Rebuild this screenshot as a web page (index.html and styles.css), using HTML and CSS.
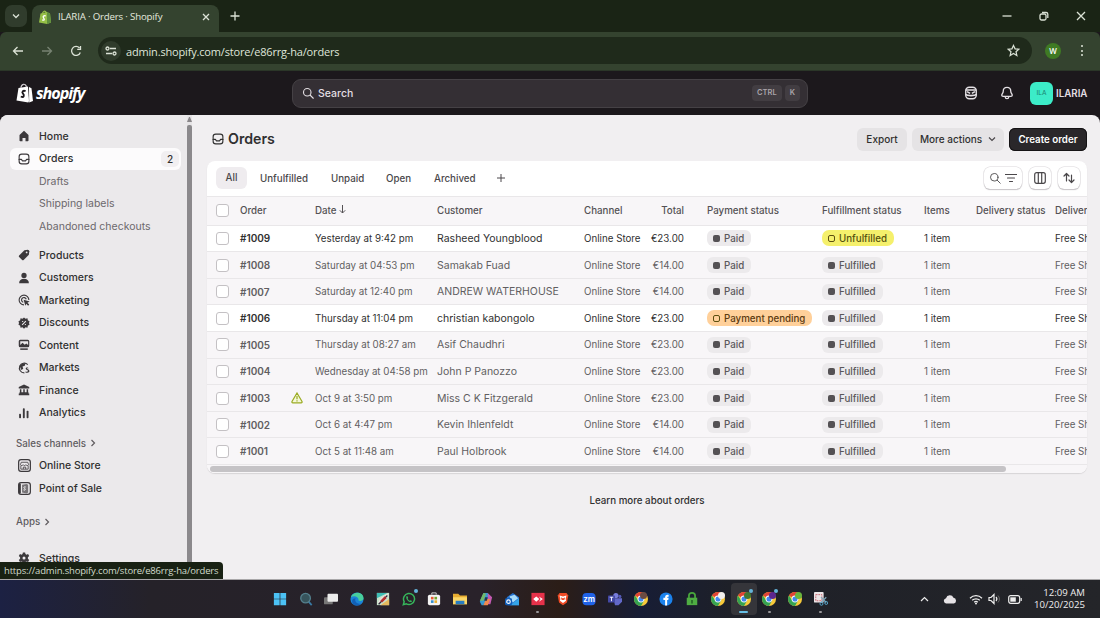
FILE: index.html
```
<!DOCTYPE html>
<html lang="en">
<head>
    <meta charset="utf-8">
    <title>ILARIA · Orders · Shopify</title>
    <link rel="stylesheet" href="styles.css">
</head>
<body>
    <svg class="defs" width="0" height="0">
        <symbol id="inbox" viewBox="0 0 16 16"><rect x="1.5" y="1.5" width="13" height="13" rx="3.5"/><path d="M1.5 8.5h3l1.5 2h4l1.5-2h3"/></symbol>
        <symbol id="search" viewBox="0 0 16 16"><circle cx="7" cy="7" r="5"/><path d="M11 11l4 4"/></symbol>
        <symbol id="chrome" viewBox="0 0 16 16">
            <circle cx="8" cy="8" r="8" fill="#f7c93a"/>
            <path d="M8 8 1.1 4A8 8 0 0 1 14.9 4L15 5H8z" fill="#e04436"/>
            <path d="M1.1 4A8 8 0 0 0 8 16l3.6-6.4L5 10z" fill="#35a352"/>
            <circle cx="8" cy="8" r="3.9" fill="#fff"/><circle cx="8" cy="8" r="2.9" fill="#4286f0"/>
        </symbol>
    </svg>

    <!-- browser -->
    <div class="tabstrip">
        <div class="tab-search"><svg width="8" height="8" viewBox="0 0 8 8"><path d="M1 2.5l3 3 3-3"/></svg></div>
        <div class="tab">
            <svg class="favicon" width="12" height="14" viewBox="0 0 12 14"><path d="M1.5 3.5 8 2l3 1.5 1 9-4 1.5L0 12.5z" fill="#95bf47"/><path d="M8 2l3 1.5 1 9L8 14z" fill="#5e8e3e"/><path d="M3.5 4c0-3 3-4 3.8-1" fill="none" stroke="#95bf47"/><path d="M6.8 6C5 5.200 3.500 6.500 4.500 7.800S6 10.800 3.200 9.800" fill="none" stroke="#fff" stroke-width="1.3"/></svg>
            <span class="tab-title">ILARIA · Orders · Shopify</span>
            <svg class="tab-close" width="8" height="8" viewBox="0 0 8 8"><path d="M1 1l6 6M7 1L1 7"/></svg>
        </div>
        <svg class="new-tab" width="10" height="10" viewBox="0 0 10 10"><path d="M5 .5v9M.5 5h9"/></svg>
        <div class="window-buttons">
            <svg width="10" height="10" viewBox="0 0 10 10"><path d="M.5 5h9"/></svg>
            <svg width="10" height="10" viewBox="0 0 10 10"><rect x="1" y="3" width="6" height="6" rx="1.500"/><path d="M3 1.500h4A1.700 1.700 0 0 1 8.800 3v4"/></svg>
            <svg width="10" height="10" viewBox="0 0 10 10"><path d="M1 1l8 8M9 1L1 9"/></svg>
        </div>
    </div>
    <div class="toolbar">
        <svg class="nav-icon" width="12" height="12" viewBox="0 0 12 12"><path d="M11 6H1.500M5.500 2l-4 4 4 4"/></svg>
        <svg class="nav-icon dim" width="12" height="12" viewBox="0 0 12 12"><path d="M1 6h9.500M6.500 2l4 4-4 4"/></svg>
        <svg class="nav-icon" width="12" height="12" viewBox="0 0 12 12"><path d="M10.300 7.500A4.500 4.500 0 1 1 9.500 3M10.500 1v3.300H7.200"/></svg>
        <div class="omnibox">
            <span class="site-info"><svg width="12" height="10" viewBox="0 0 12 10"><path d="M5 2.500h6M1 7.500h6"/><circle cx="2.500" cy="2.500" r="1.500"/><circle cx="9.500" cy="7.500" r="1.500"/></svg></span>
            <span class="url">admin.shopify.com/store/e86rrg-ha/orders</span>
            <svg class="star" width="13" height="13" viewBox="0 0 14 14"><path d="M7 1.500l1.700 3.700 4 .4-3 2.700.9 4L7 10.200l-3.600 2.100.9-4-3-2.700 4-.4z"/></svg>
        </div>
        <span class="profile">W</span>
        <span class="kebab"><i></i><i></i><i></i></span>
    </div>

    <!-- admin top bar -->
    <div class="topbar">
        <div class="logo">
            <svg width="18" height="20" viewBox="0 0 18 20"><path d="M2.500 5 12 3.500l1 14.500-.6 1.500L.5 17.500z" fill="#fff"/><path d="M13 4l2.500 1.300L17 18l-3.800 1.500z" fill="#fff"/><path d="M5 5c0-4 4.500-5.500 5.500-1" fill="none" stroke="#cfcacf" stroke-width="1.200"/><path d="M9.600 8.200C7 7 5.500 9 7 10.700s1 4.300-2.200 2.800" fill="none" stroke="#1c181c" stroke-width="1.900"/></svg>
            <span>shopify</span>
        </div>
        <div class="search">
            <svg class="line" width="12" height="12"><use href="#search"/></svg>
            <span class="search-text">Search</span>
            <kbd>CTRL</kbd><kbd>K</kbd>
        </div>
        <div class="account">
            <svg width="14" height="14" viewBox="0 0 16 16"><rect x="2" y="1.500" width="12" height="13" rx="4" fill="none" stroke="#e3dfe3" stroke-width="1.600"/><path d="M2 4.500h12M1.500 9.500c2.500 2 10.500 2 13 0M3.500 6.500l3.500 2M12.500 6.500l-3.500 2" fill="none" stroke="#e3dfe3" stroke-width="1.800"/></svg>
            <svg class="line" width="14" height="14" viewBox="0 0 16 16"><path d="M8 1.500c-3 0-4.300 2-4.300 4.500 0 2.500-1.700 3-1.700 4.600 0 .9.700 1.200 1.500 1.200h9c.8 0 1.500-.3 1.500-1.200 0-1.600-1.700-2.100-1.700-4.600 0-2.500-1.300-4.500-4.300-4.500zM6 12.500c0 2.700 4 2.700 4 0"/></svg>
            <span class="avatar">ILA</span>
            <span class="store-name">ILARIA</span>
        </div>
    </div>

    <div class="app">
        <div class="sidebar">
            <div class="nav-item"><svg viewBox="0 0 16 16"><path d="M8 1 14 6.500V14a1 1 0 0 1-1 1h-3v-4.500H6V15H3a1 1 0 0 1-1-1V6.500z"/></svg>Home</div>
            <div class="nav-item active"><svg class="line"><use href="#inbox"/></svg>Orders<span class="count">2</span></div>
            <div class="nav-item sub">Drafts</div>
            <div class="nav-item sub">Shipping labels</div>
            <div class="nav-item sub">Abandoned checkouts</div>
            <div class="nav-group">
                <div class="nav-item"><svg viewBox="0 0 16 16"><path d="M8.500 1.500 13 1a2 2 0 0 1 2 2l-.5 4.500-7 7a1.500 1.500 0 0 1-2 0l-4-4a1.500 1.500 0 0 1 0-2z"/><circle cx="11.500" cy="4.500" r="1.200" fill="#ebe9eb"/></svg>Products</div>
                <div class="nav-item"><svg viewBox="0 0 16 16"><circle cx="8" cy="4.500" r="3.500"/><path d="M1.500 15c0-4 2.500-6 6.500-6s6.500 2 6.500 6z"/></svg>Customers</div>
                <div class="nav-item"><svg viewBox="0 0 16 16"><path class="stroke" d="M14.500 8A6.500 6.500 0 1 0 8 14.500M11 7a3.200 3.200 0 1 0-4 4"/><path d="M7.500 7.500 15.500 10l-3 1.500 2.500 2.500-1.500 1.500-2.500-2.500-1.200 2.500z"/></svg>Marketing</div>
                <div class="nav-item"><svg viewBox="0 0 16 16"><path d="M8 .5l2 1.700 2.600-.4.5 2.600L15.500 6 14.600 8l.9 2-2.400 1.600-.5 2.600-2.600-.4-2 1.700-2-1.700-2.600.4-.5-2.600L.5 10l.9-2-.9-2 2.400-1.600.5-2.600 2.600.4z"/><path d="M5.500 10.500l5-5M5.500 6h1.400M9.100 10h1.400" stroke="#ebe9eb" stroke-width="1.400"/></svg>Discounts</div>
                <div class="nav-item"><svg viewBox="0 0 16 16"><path fill-rule="evenodd" d="M3 1h10a2 2 0 0 1 2 2v6a2 2 0 0 1-2 2H3a2 2 0 0 1-2-2V3a2 2 0 0 1 2-2zM3 8l3-3 3 2.500L11 6l2.500 2V3H3z"/><path d="M3 12.500h10v2H3z"/></svg>Content</div>
                <div class="nav-item"><svg viewBox="0 0 16 16"><path class="stroke" d="M8.500 14.500A6.500 6.500 0 1 1 13 3.500"/><path d="M2 5l4-3.500 4 .5-1 3-3 1 1 3-2.500 1.500zM13 7v-1M13.500 7.500c-4-1-4 2.500-1.500 3s1.800 3.500-2 2v1.500c6 2 6.500-3.500 3-4.500-2-.6-1-1.500 1-.7z"/></svg>Markets</div>
                <div class="nav-item"><svg viewBox="0 0 16 16"><path d="M8 .5 15 4v2H1V4zM2.500 7h2v4h-2zM7 7h2v4H7zM11.500 7h2v4h-2zM2 11h12v1.500h1V15H1v-2.500h1z"/></svg>Finance</div>
                <div class="nav-item"><svg viewBox="0 0 16 16"><rect x="1.500" y="9" width="2.500" height="6" rx="1"/><rect x="6.500" y="1.500" width="2.500" height="13.500" rx="1"/><rect x="11.500" y="5" width="2.500" height="10" rx="1"/></svg>Analytics</div>
            </div>
            <div class="nav-heading sales">Sales channels <svg width="6" height="8" viewBox="0 0 6 8"><path d="M1.500 1l3 3-3 3"/></svg></div>
            <div class="nav-item channel"><svg viewBox="0 0 16 16"><rect class="stroke" x=".8" y=".8" width="14.400" height="14.400" rx="3"/><path class="stroke thin" d="M3.500 8V12.500h9V8M4 4h8l1 3c-1 1.500-2.500 1.500-3.300 0-.7 1.500-2.700 1.500-3.400 0-.8 1.500-2.300 1.500-3.300 0zM6.500 12.500v-2.500h3v2.500"/></svg>Online Store</div>
            <div class="nav-item channel"><svg viewBox="0 0 16 16"><rect class="stroke" x=".8" y=".8" width="14.400" height="14.400" rx="3"/><path d="M5 3.500 10.500 2.500l2 1V13l-2 1L5 13z" fill="#777477"/><path d="M9.500 6.300C8 5.200 6.500 6.500 8 7.700s1.200 3-1.200 2" fill="none" stroke="#fff" stroke-width="1.200"/><path d="M1 2h2.500v12H1z"/></svg>Point of Sale</div>
            <div class="nav-heading apps">Apps <svg width="6" height="8" viewBox="0 0 6 8"><path d="M1.500 1l3 3-3 3"/></svg></div>
            <div class="nav-item settings"><svg viewBox="0 0 16 16"><path fill-rule="evenodd" d="M6.500.5h3l.4 2.200 1.400.8 2.100-.8 1.500 2.600L13.200 7v2l1.700 1.700-1.500 2.600-2.100-.8-1.400.8-.4 2.200h-3l-.4-2.200-1.400-.8-2.100.8-1.500-2.600L2.800 9V7L1.100 5.300l1.500-2.600 2.100.8 1.400-.8zM8 6a2 2 0 1 0 0 4 2 2 0 0 0 0-4z"/></svg>Settings</div>
        </div>
        <div class="scroll-track"><span class="arrow-up"></span><span class="thumb"></span></div>

        <div class="main">
            <div class="page-header">
                <svg class="line" width="12" height="12"><use href="#inbox"/></svg>
                <h1>Orders</h1>
                <span class="btn export">Export</span>
                <span class="btn more">More actions <svg width="8" height="8" viewBox="0 0 8 8"><path d="M1 2.500l3 3 3-3"/></svg></span>
                <span class="btn primary">Create order</span>
            </div>

            <div class="card">
                <div class="views">
                    <span class="view selected">All</span>
                    <span class="view v-unfulfilled">Unfulfilled</span>
                    <span class="view v-unpaid">Unpaid</span>
                    <span class="view v-open">Open</span>
                    <span class="view v-archived">Archived</span>
                    <svg class="add-view" width="8" height="8" viewBox="0 0 8 8"><path d="M4 0v8M0 4h8"/></svg>
                    <span class="tool wide">
                        <svg class="line" width="12" height="12"><use href="#search"/></svg>
                        <svg class="line" width="12" height="12" viewBox="0 0 12 12"><path d="M.5 2.500h11M2.500 6h7M4.500 9.500h3"/></svg>
                    </span>
                    <span class="tool"><svg class="line" width="12" height="12" viewBox="0 0 12 12"><rect x=".7" y=".7" width="10.600" height="10.600" rx="2"/><path d="M4.300 1v10M7.700 1v10"/></svg></span>
                    <span class="tool"><svg class="line" width="12" height="12" viewBox="0 0 12 12"><path d="M3.500 9V1.500M1 4l2.500-2.500L6 4M8.500 3v7.500M6 8l2.500 2.500L11 8"/></svg></span>
                </div>

                <div class="row head">
                    <i class="check"></i><span>Order</span><span></span><span>Date <svg class="sort" width="7" height="9" viewBox="0 0 7 9"><path d="M3.500 0v8M.8 5.300l2.700 2.700 2.700-2.700"/></svg></span><span>Customer</span><span>Channel</span><span class="total">Total</span><span>Payment status</span><span>Fulfillment status</span><span>Items</span><span>Delivery status</span><span>Delivery method</span>
                </div>
                <div class="row open">
                    <i class="check"></i><b>#1009</b><span></span><span>Yesterday at 9:42 pm</span><span class="customer">Rasheed Youngblood</span><span>Online Store</span><span class="total">€23.00</span><span><em class="badge">Paid</em></span><span><em class="badge yellow">Unfulfilled</em></span><span>1 item</span><span></span><span>Free Shipping</span>
                </div>
                <div class="row">
                    <i class="check"></i><b>#1008</b><span></span><span>Saturday at 04:53 pm</span><span class="customer">Samakab Fuad</span><span>Online Store</span><span class="total">€14.00</span><span><em class="badge">Paid</em></span><span><em class="badge">Fulfilled</em></span><span>1 item</span><span></span><span>Free Shipping</span>
                </div>
                <div class="row">
                    <i class="check"></i><b>#1007</b><span></span><span>Saturday at 12:40 pm</span><span class="customer">ANDREW WATERHOUSE</span><span>Online Store</span><span class="total">€14.00</span><span><em class="badge">Paid</em></span><span><em class="badge">Fulfilled</em></span><span>1 item</span><span></span><span>Free Shipping</span>
                </div>
                <div class="row open">
                    <i class="check"></i><b>#1006</b><span></span><span>Thursday at 11:04 pm</span><span class="customer">christian kabongolo</span><span>Online Store</span><span class="total">€23.00</span><span><em class="badge orange">Payment pending</em></span><span><em class="badge">Fulfilled</em></span><span>1 item</span><span></span><span>Free Shipping</span>
                </div>
                <div class="row">
                    <i class="check"></i><b>#1005</b><span></span><span>Thursday at 08:27 am</span><span class="customer">Asif Chaudhri</span><span>Online Store</span><span class="total">€23.00</span><span><em class="badge">Paid</em></span><span><em class="badge">Fulfilled</em></span><span>1 item</span><span></span><span>Free Shipping</span>
                </div>
                <div class="row">
                    <i class="check"></i><b>#1004</b><span></span><span>Wednesday at 04:58 pm</span><span class="customer">John P Panozzo</span><span>Online Store</span><span class="total">€23.00</span><span><em class="badge">Paid</em></span><span><em class="badge">Fulfilled</em></span><span>1 item</span><span></span><span>Free Shipping</span>
                </div>
                <div class="row">
                    <i class="check"></i><b>#1003</b><svg class="warn" width="12" height="12" viewBox="0 0 12 12"><path d="M6 1 11 9.500c.3.700 0 1.300-.8 1.300H1.800c-.8 0-1.100-.6-.8-1.300zM6 4v3.300M6 8.300v1.200"/></svg><span>Oct 9 at 3:50 pm</span><span class="customer">Miss C K Fitzgerald</span><span>Online Store</span><span class="total">€23.00</span><span><em class="badge">Paid</em></span><span><em class="badge">Fulfilled</em></span><span>1 item</span><span></span><span>Free Shipping</span>
                </div>
                <div class="row">
                    <i class="check"></i><b>#1002</b><span></span><span>Oct 6 at 4:47 pm</span><span class="customer">Kevin Ihlenfeldt</span><span>Online Store</span><span class="total">€14.00</span><span><em class="badge">Paid</em></span><span><em class="badge">Fulfilled</em></span><span>1 item</span><span></span><span>Free Shipping</span>
                </div>
                <div class="row">
                    <i class="check"></i><b>#1001</b><span></span><span>Oct 5 at 11:48 am</span><span class="customer">Paul Holbrook</span><span>Online Store</span><span class="total">€14.00</span><span><em class="badge">Paid</em></span><span><em class="badge">Fulfilled</em></span><span>1 item</span><span></span><span>Free Shipping</span>
                </div>
                <div class="hscroll"><span></span></div>
            </div>
            <p class="learn">Learn more about orders</p>
        </div>
        <div class="status-url">https://admin.shopify.com/store/e86rrg-ha/orders</div>
    </div>

    <!-- windows taskbar -->
    <div class="taskbar">
        <div class="apps-row">
            <span><svg viewBox="0 0 16 16"><path d="M1 1h6.600v6.600H1zM8.400 1H15v6.600H8.400zM1 8.400h6.600V15H1zM8.400 8.400H15V15H8.400z" fill="#4cc2f5"/></svg></span>
            <span><svg viewBox="0 0 16 16"><path d="M11 11l3.500 4" stroke="#397aa5" stroke-width="2"/><circle cx="7.500" cy="7" r="5.500" fill="#37545c" stroke="#54808d" stroke-width="1.500"/></svg></span>
            <span><svg viewBox="0 0 16 16"><rect x="0" y="6" width="10" height="8" rx="1" fill="#777"/><rect x="4" y="2" width="12" height="9" rx="1" fill="#ececec"/></svg></span>
            <span><svg viewBox="0 0 16 16"><circle cx="8" cy="8" r="7.500" fill="#1b84d8"/><path d="M1 6C3-1 15-1 15.500 7c0 3-4 4-6 2.500C11 6 5 3 1 6z" fill="#48cf9c"/><path d="M6.500 7c-2 4 2 7 6 6.500-4 4-11 1-10-4 .4-1.500 2-2.500 4-2.500z" fill="#1260b5"/></svg></span>
            <span><svg viewBox="0 0 16 16"><rect x="1" y="1" width="14" height="14" fill="#c9e2cb"/><path d="M1 7V1h12z" fill="#3fbdb5"/><path d="M15 8v7H5z" fill="#e5b95d"/><path d="M2 13c2-6 6-9 12-11-1 6-4 9-12 11z" fill="#e9ded8"/><path d="M3 14 13 4" stroke="#30283a" stroke-width="1.500"/><path d="M6 11l5-5" stroke="#b3302f" stroke-width="3"/></svg></span>
            <span><svg viewBox="0 0 16 16"><path d="M1.500 14.500l1-3.500A6.300 6.300 0 1 1 5 13.500z" fill="none" stroke="#36b65b" stroke-width="1.700"/><path d="M5 5c1-1 1.500 0 2 1.500L6.500 8l2 2 1.500-.7c2 .7 1.500 1.700.5 2.200C8 12 4 8 5 5z" fill="#36b65b"/></svg><i class="notify"></i></span>
            <span><svg viewBox="0 0 16 16"><path d="M5.500 3V1h5v2" fill="none" stroke="#ddd"/><rect x="1" y="3" width="14" height="12" rx="2" fill="#f3f3f3"/><path d="M4.500 5.500h3v3h-3z" fill="#e55a37"/><path d="M8.500 5.500h3v3h-3z" fill="#71a62f"/><path d="M4.500 9.500h3v3h-3z" fill="#328dce"/><path d="M8.500 9.500h3v3h-3z" fill="#e7ae2d"/></svg></span>
            <span><svg viewBox="0 0 16 16"><path d="M0 2h6l2 2h8v10H0z" fill="#e8ad31"/><path d="M0 6h16v8H0z" fill="#fbd767"/><path d="M3 10h10v4H3z" fill="#287cc1"/></svg></span>
            <span><svg viewBox="0 0 16 16"><path d="M5 1h5l2 4-3 5-4 5H3L1 11z" fill="#369ad1"/><path d="M10 1l5 5-2 8H8l2-6z" fill="#c45ab3"/><path d="M1 10l4-9 3 1-3 8z" fill="#73b969"/><path d="M5 15l3-7 5 0-3 7z" fill="#f08a4c"/><path d="M7 6h3l-1 4H6z" fill="#293448"/></svg></span>
            <span><svg viewBox="0 0 16 16"><path d="M2 6 9 1l7 5v9H3z" fill="#2672ce"/><path d="M5 5l6-2 4 4-6 5z" fill="#a8dcfa"/><path d="M16 7v8H6z" fill="#35a5e9"/><rect x="0" y="7" width="8" height="8" rx="1.500" fill="#0f5dba"/><circle cx="4" cy="11" r="2" fill="none" stroke="#fff" stroke-width="1.300"/></svg></span>
            <span><svg viewBox="0 0 16 16"><rect x=".5" y="1" width="15" height="14" fill="#e6324a"/><path d="M2.500 8 6 5l3.500 3L6 11zM9 5l4.500 3L9 11l2-3z" fill="#fff"/></svg><i class="dot"></i></span>
            <span><svg viewBox="0 0 16 16"><path d="M4 1h8l2 3-1.500 8L8 15l-4.500-3L2 4z" fill="#f04b25"/><path d="M4 4l4 1 4-1-1 4 .5 2L8 12.500 4.500 10 5 8z" fill="#fff"/><path d="M5.500 6l2 1h1l2-1-1 3h-3z" fill="#f04b25"/></svg></span>
            <span><svg viewBox="0 0 16 16"><rect x=".5" y="1" width="15" height="14" rx="4.500" fill="#1f62e8"/></svg><small>zm</small></span>
            <span><svg viewBox="0 0 16 16"><circle cx="9" cy="4" r="3" fill="#777cdb"/><circle cx="13.500" cy="5" r="1.800" fill="#5459b7"/><path d="M6 7h10v4l-4 4H8z" fill="#6268c8"/><rect y="4" width="8" height="8" rx="1" fill="#4449a6"/><path d="M2 6h4M4 6v4.500" stroke="#fff"/></svg></span>
            <span><svg><use href="#chrome"/></svg><i class="face brown"></i></span>
            <span><svg viewBox="0 0 16 16"><circle cx="8" cy="8" r="7.500" fill="#1b82ed"/><path d="M7 15.500V9H5V6.500h2C7 3.800 8 3 11 3.300v2.200c-1.500 0-1.700.1-1.700 1H11L10.600 9H9.300v6.500z" fill="#fff"/></svg></span>
            <span><svg viewBox="0 0 16 16"><path d="M4.500 8V4c0-4 7-4 7 0v4" fill="none" stroke="#48a63c" stroke-width="2"/><rect x="2" y="6.500" width="12" height="8.500" fill="#4fad43"/><path d="M7.200 9h1.600v4H7.200z" fill="#1d5a20"/></svg></span>
            <span><svg><use href="#chrome"/></svg><i class="face white"></i></span>
            <span class="current"><svg><use href="#chrome"/></svg><i class="face green"></i><i class="notify"></i><i class="dot"></i></span>
            <span><svg><use href="#chrome"/></svg><i class="face purple"></i><i class="notify"></i><i class="dot"></i></span>
            <span><svg><use href="#chrome"/></svg><i class="face lime"></i></span>
            <span><svg viewBox="0 0 16 16"><rect x="0" y="0" width="11" height="12" rx="1" fill="#ebe5e7"/><path d="M2 3h7v7H2z" fill="none" stroke="#c65b65" stroke-dasharray="2 1"/><path d="M8 6l6 6M14 6l-6 6" stroke="#7fa4b7" stroke-width="1.500"/><circle cx="8.500" cy="13.500" r="1.700" fill="none" stroke="#5cb0d8"/><circle cx="14" cy="12.500" r="1.700" fill="none" stroke="#5cb0d8"/></svg><i class="dot"></i></span>
        </div>
        <div class="tray">
            <svg width="9" height="8" viewBox="0 0 9 8"><path class="tray-line" d="M1 6l3.500-3.500L8 6"/></svg>
            <svg class="cloud" width="14" height="10" viewBox="0 0 14 10"><path d="M3 9.500a2.700 2.700 0 0 1 0-5.300 4 4 0 0 1 7.500-.5 3 3 0 0 1 .5 5.800z" fill="#e6e3e6"/></svg>
            <svg class="wifi" width="14" height="11" viewBox="0 0 14 11"><path class="tray-line" d="M1 4.200a8.500 8.500 0 0 1 12 0M3.200 6.300a5.500 5.500 0 0 1 7.600 0M5.200 8.300a2.700 2.700 0 0 1 3.600 0"/><circle cx="7" cy="9.500" r="1" fill="#eee"/></svg>
            <svg class="volume" width="13" height="12" viewBox="0 0 13 12"><path class="tray-line" d="M1 4.500h2L6 1.500v9L3 7.500H1zM8 4a3 3 0 0 1 0 4"/><path d="M10 2.500a5 5 0 0 1 0 7" fill="none" stroke="#666"/></svg>
            <svg class="battery" width="14" height="9" viewBox="0 0 14 9"><rect class="tray-line" x=".7" y=".7" width="11" height="7.600" rx="2"/><rect x="2.300" y="2.300" width="5.500" height="4.400" fill="#eee"/><path class="tray-line" d="M13.200 3v3"/></svg>
            <div class="clock">12:09 AM<br>10/20/2025</div>
        </div>
    </div>
</body>
</html>
```
FILE: styles.css
```
* {
    box-sizing: border-box;
}
body {
    margin: 0;
    width: 1100px;
    height: 618px;
    overflow: hidden;
    background: #1c181c;
    font-family: Inter, "Liberation Sans", sans-serif;
    font-size: 9.75px;
    color: #303030;
}
svg {
    display: block;
    flex: none;
}
.defs {
    position: absolute;
}
.line {
    fill: none;
    stroke: currentColor;
    stroke-width: 1.5;
    stroke-linecap: round;
    stroke-linejoin: round;
}

/* browser */
.tabstrip {
    display: flex;
    align-items: center;
    height: 32px;
    padding-left: 5px;
    background: #1a2415;
    font-family: "Open Sans", "Noto Sans", sans-serif;
}
.tabstrip svg,
.toolbar svg {
    fill: none;
    stroke: #dbe2d6;
    stroke-width: 1.3;
}
.tabstrip .favicon {
    stroke: none;
}
.tab-search {
    display: flex;
    align-items: center;
    justify-content: center;
    width: 22px;
    height: 22px;
    border-radius: 7px;
    background: #303c2c;
}
.tab {
    display: flex;
    align-items: center;
    align-self: flex-end;
    width: 187px;
    height: 27px;
    margin-left: 5px;
    padding: 0 9px 4px 7px;
    border-radius: 8px 8px 0 0;
    background: #34432f;
    color: #e4eadf;
}
.tab-title {
    flex: 1;
    margin-left: 7px;
    font-size: 9.7px;
    letter-spacing: -0.18px;
    white-space: nowrap;
}
.new-tab {
    margin-left: 11px;
}
.window-buttons {
    display: flex;
    gap: 27px;
    margin-left: auto;
    padding-right: 14px;
}
.toolbar {
    display: flex;
    align-items: center;
    height: 39px;
    padding: 0 14px 1px 12px;
    border-bottom: 1px solid #2b3628;
    border-radius: 6px 6px 0 0;
    background: #34432f;
    font-family: "Open Sans", "Noto Sans", sans-serif;
}
.nav-icon {
    margin-right: 17px;
}
.toolbar .dim {
    opacity: 0.4;
}
.omnibox {
    display: flex;
    align-items: center;
    width: 934px;
    height: 27px;
    margin-left: -1px;
    padding: 0 12px 0 3px;
    border-radius: 14px;
    background: #1f2a1b;
}
.site-info {
    display: flex;
    align-items: center;
    justify-content: center;
    width: 20px;
    height: 20px;
    border-radius: 50%;
    background: #303c2c;
}
.url {
    flex: 1;
    margin-left: 5px;
    padding-top: 1px;
    font-size: 11px;
    letter-spacing: -0.17px;
    color: #dfe6da;
}
.profile {
    width: 16px;
    height: 16px;
    margin-left: 13px;
    border-radius: 50%;
    background: #3f7a24;
    color: #fff;
    font-size: 8px;
    font-weight: 600;
    line-height: 16px;
    text-align: center;
}
.kebab {
    display: grid;
    gap: 2.5px;
    margin-left: auto;
    margin-right: 3px;
}
.kebab i {
    width: 2px;
    height: 2px;
    border-radius: 50%;
    background: #dfe6da;
}

/* admin top bar */
.topbar {
    display: grid;
    grid-template-columns: 276px 516px 1fr;
    align-items: center;
    height: 44px;
    padding-left: 16px;
    background: #1c181c;
    color: #e3dfe3;
}
.logo {
    display: flex;
    align-items: center;
    gap: 2px;
    color: #fff;
    font-family: "Open Sans", "Noto Sans", sans-serif;
    font-size: 16.2px;
    font-style: italic;
    font-weight: 700;
    line-height: 20px;
    letter-spacing: -1.05px;
}
.search {
    display: flex;
    align-items: center;
    height: 29px;
    padding: 0 7px 0 9px;
    border: 1px solid #454145;
    border-radius: 9px;
    background: #342f34;
}
.search-text {
    flex: 1;
    margin-left: 4px;
    font-size: 10.500px;
    font-weight: 500;
}
kbd {
    height: 16px;
    margin-left: 3px;
    padding: 0 5px;
    border-radius: 4px;
    background: #423d42;
    color: #aaa5aa;
    font-family: inherit;
    font-size: 7.500px;
    font-weight: 600;
    line-height: 16px;
}
.account {
    display: flex;
    align-items: center;
    padding-left: 156px;
}
.account .line {
    margin-left: 22px;
}
.avatar {
    flex: none;
    width: 23px;
    height: 23px;
    margin-left: 16px;
    border-radius: 6px;
    background: #3cecc8;
    color: #18816d;
    font-size: 6.500px;
    line-height: 23px;
    text-align: center;
}
.store-name {
    margin-left: 3px;
    font-weight: 600;
}

.app {
    position: relative;
    display: flex;
    height: 465px;
    overflow: hidden;
    border-bottom: 1px solid #a9a7a9;
    border-radius: 8px 8px 0 0;
    background: #f1eff1;
}
.sidebar {
    width: 187px;
    padding: 10px 6px 0 10px;
    background: #ebe9eb;
    font-size: 10.500px;
    font-weight: 500;
}
.nav-item {
    display: flex;
    align-items: center;
    height: 22.5px;
    padding-left: 8px;
    border-radius: 6px;
}
.nav-item svg {
    width: 12px;
    height: 12px;
    margin-right: 9px;
    fill: #3c393c;
}
.channel svg {
    width: 13px;
    height: 13px;
    margin-right: 8px;
}
.nav-item .line,
.nav-item .stroke {
    fill: none;
    stroke: #3c393c;
    stroke-width: 1.5;
}
.nav-item .thin {
    stroke-width: 1;
}
.nav-item.active {
    background: #fcfbfc;
}
.nav-item.sub {
    padding-left: 29px;
    color: #6b686b;
    font-weight: 400;
}
.count {
    width: 18px;
    height: 16px;
    margin-left: auto;
    margin-right: 2px;
    border-radius: 5px;
    background: #f1eff1;
    font-size: 10px;
    line-height: 16px;
    text-align: center;
}
.nav-group {
    margin-top: 6.5px;
}
.nav-heading {
    display: flex;
    align-items: center;
    gap: 4px;
    height: 22.5px;
    padding-left: 6px;
    color: #5f5c5f;
    font-size: 9.75px;
}
.nav-heading svg {
    fill: none;
    stroke: #5f5c5f;
    stroke-width: 1.2;
}
.sales {
    margin-top: 8px;
}
.apps {
    margin-top: 11px;
}
.settings {
    margin-top: 14px;
}
.scroll-track {
    width: 5px;
    background: #e6e4e6;
}
.arrow-up {
    display: block;
    height: 5px;
    margin-top: 2px;
    border: solid transparent;
    border-width: 0 2.500px 5px;
    border-bottom-color: #8a878a;
}
.thumb {
    display: block;
    height: 460px;
    margin-top: 3px;
    border-radius: 2px;
    background: #8b898c;
}

/* orders page */
.main {
    flex: 1;
    min-width: 0;
    padding: 12.5px 13px 0 15px;
}
.page-header {
    display: flex;
    align-items: center;
    height: 23px;
    padding-left: 5px;
}
h1 {
    flex: 1;
    margin: 0 0 1px 4px;
    font-size: 14.2px;
    font-weight: 600;
}
.btn {
    display: flex;
    align-items: center;
    justify-content: center;
    height: 23px;
    margin-left: 5px;
    border-radius: 6px;
    background: #e5e3e5;
    font-size: 10px;
    font-weight: 500;
}
.export {
    width: 50px;
}
.more {
    width: 92px;
}
.btn svg {
    margin-left: 6px;
    fill: none;
    stroke: #4a474a;
    stroke-width: 1.2;
}
.primary {
    width: 78px;
    background: #2a272a;
    box-shadow: inset 0 0 0 1px #151315;
    color: #fff;
    font-size: 9.75px;
    font-weight: 600;
}
.card {
    height: 312px;
    margin-top: 10.5px;
    overflow: hidden;
    border-radius: 8px;
    background: #fff;
    box-shadow: 0 1px 1px #d6d4d6;
}
.views {
    display: flex;
    align-items: center;
    height: 35px;
    padding: 0 7px 1px 9px;
    color: #4a474a;
    font-weight: 500;
}
.view {
    white-space: nowrap;
}
.selected {
    width: 31px;
    height: 22px;
    border-radius: 6px;
    background: #efecef;
    line-height: 22px;
    text-align: center;
}
.v-unfulfilled {
    width: 71px;
    margin-left: 13px;
}
.v-unpaid {
    width: 55px;
}
.v-open {
    width: 48px;
}
.v-archived {
    width: 63px;
}
.add-view {
    stroke: #4a474a;
}
.tool {
    display: flex;
    align-items: center;
    justify-content: center;
    gap: 4px;
    width: 22px;
    height: 22px;
    margin-left: 7px;
    border-radius: 6px;
    box-shadow: 0 0 0 0.5px #d9d6d9, 0 1px 1px #b9b6b9;
}
.tool svg {
    stroke-width: 1.2;
}
.tool.wide {
    width: 38px;
    margin-left: auto;
}
.row {
    display: grid;
    grid-template-columns: 23px 51px 24px 122px 147px 66px 34px 23px 115px 102px 52px 79px 110px;
    align-items: center;
    height: 26.6px;
    padding-left: 10px;
    border-top: 1px solid #e9e7e9;
    background: #f8f6f8;
    color: #615e61;
    white-space: nowrap;
}
.row > :nth-child(8) {
    grid-column: 9;
}
.row.head {
    height: 28.7px;
    color: #545154;
    font-weight: 500;
}
.row.open {
    background: #fff;
    color: #303030;
}
.row b {
    font-size: 10px;
    font-weight: 600;
}
.customer {
    font-size: 10.500px;
}
.total {
    text-align: right;
}
.check {
    width: 13px;
    height: 13px;
    margin-left: -1px;
    border: 1px solid #c4c1c4;
    border-radius: 3px;
    background: #fff;
}
.sort {
    display: inline-block;
    fill: none;
    stroke: #545154;
}
.warn {
    fill: #f4f8d8;
    stroke: #9aab22;
    stroke-width: 1.2;
}
.badge {
    display: inline-flex;
    align-items: center;
    height: 16px;
    padding: 0 7px 0 6px;
    border-radius: 6px;
    background: #eceaec;
    color: #5a575a;
    font-style: normal;
    font-weight: 500;
    vertical-align: middle;
}
.badge::before {
    content: "";
    box-sizing: border-box;
    width: 7px;
    height: 7px;
    margin-right: 4px;
    border-radius: 2px;
    background: #545154;
}
.badge.yellow,
.badge.orange {
    border-radius: 7px;
}
.badge.yellow {
    background: #f5f06c;
    color: #54510e;
}
.badge.orange {
    background: #ffd09a;
    color: #5c3b10;
}
.badge.yellow::before,
.badge.orange::before {
    border: 1.5px solid #5c4f10;
    background: none;
}
.hscroll {
    height: 9px;
    padding: 1px 0 0 3px;
    background: #f8f6f8;
    border-top: 1px solid #e9e7e9;
}
.hscroll span {
    display: block;
    width: 796px;
    height: 6px;
    border-radius: 3px;
    background: #c5c3c6;
}
.learn {
    margin: 22px 0 0;
    font-weight: 500;
    text-align: center;
}
.status-url {
    position: absolute;
    left: 0;
    bottom: 0;
    width: 223px;
    height: 17px;
    padding-left: 4px;
    border-radius: 0 4px 0 0;
    background: #182113;
    color: #d3dccd;
    font-family: "Open Sans", "Noto Sans", sans-serif;
    font-size: 9.5px;
    letter-spacing: -0.17px;
    line-height: 17px;
    white-space: nowrap;
}

/* taskbar */
.taskbar {
    display: flex;
    align-items: center;
    height: 38px;
    padding-left: 267px;
    background: linear-gradient(90deg, #1c2143 0, #252229 150px, #29222a 480px, #2b1d17 560px, #171d35 640px, #1e2028 730px, #242529 100%);
}
.apps-row {
    display: grid;
    grid-template-columns: repeat(22, 25.78px);
}
.apps-row span {
    position: relative;
    display: flex;
    align-items: center;
    justify-content: center;
    height: 32px;
    border-radius: 4px;
}
.apps-row svg {
    width: 14px;
    height: 14px;
}
.apps-row .current {
    background: #35353a;
}
.apps-row small {
    position: absolute;
    color: #fff;
    font-size: 8px;
    font-weight: 600;
}
.dot {
    position: absolute;
    bottom: 2px;
    width: 3px;
    height: 2px;
    border-radius: 1px;
    background: #9a989b;
}
.current .dot {
    width: 9px;
    background: #67bfe5;
}
.notify {
    position: absolute;
    top: 6px;
    right: 4px;
    width: 4px;
    height: 4px;
    border-radius: 50%;
    background: #65b4da;
}
.face {
    position: absolute;
    top: 9px;
    right: 6px;
    width: 7px;
    height: 7px;
    border-radius: 50%;
}
.brown { background: #6b4b42; }
.white { background: #f3f1ee; }
.green { background: #407833; }
.purple { background: #5b268f; }
.lime { background: #69b63d; }
.tray {
    display: flex;
    align-items: center;
    flex: 1;
    padding: 0 15px 0 86px;
    color: #f0eef0;
    font-family: "Open Sans", "Noto Sans", sans-serif;
}
.tray-line {
    fill: none;
    stroke: #eee;
    stroke-width: 1.2;
}
.cloud { margin-left: 14px; }
.wifi { margin-left: 12px; }
.volume { margin-left: 5px; }
.battery { margin-left: 7px; }
.clock {
    margin-left: auto;
    font-size: 9.6px;
    line-height: 12.5px;
    text-align: right;
}
```
